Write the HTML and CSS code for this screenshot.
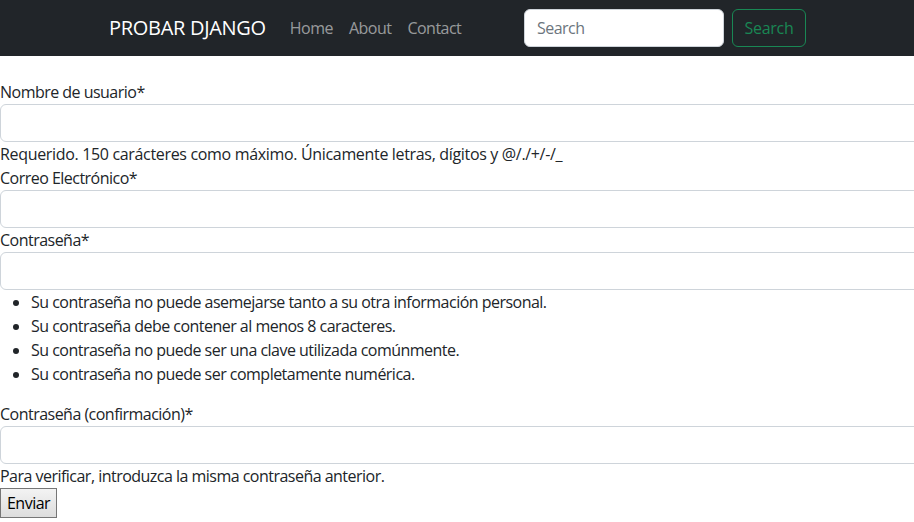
FILE: index.html
```html
<!DOCTYPE html>
<html lang="es">
<head>
<meta charset="utf-8">
<title>Probar Django</title>
<link rel="stylesheet" href="styles.css">
</head>
<body>
<nav class="navbar">
  <div class="nav-inner">
    <a class="brand" href="#">PROBAR DJANGO</a>
    <ul class="nav-links">
      <li><a href="#">Home</a></li>
      <li><a href="#">About</a></li>
      <li><a href="#">Contact</a></li>
    </ul>
    <form class="search">
      <input class="search-input" type="search" placeholder="Search">
      <button class="search-btn" type="button">Search</button>
    </form>
  </div>
</nav>
<main class="page">
  <form class="signup">
    <label class="lbl">Nombre de usuario*</label>
    <input class="field" type="text">
    <span class="help help-wide">Requerido. 150 carácteres como máximo. Únicamente letras, dígitos y @/./+/-/_</span>
    <label class="lbl">Correo Electrónico*</label>
    <input class="field" type="email">
    <label class="lbl">Contraseña*</label>
    <input class="field" type="password">
    <ul class="rules">
      <li>Su contraseña no puede asemejarse tanto a su otra información personal.</li>
      <li>Su contraseña debe contener al menos 8 caracteres.</li>
      <li>Su contraseña no puede ser una clave utilizada comúnmente.</li>
      <li>Su contraseña no puede ser completamente numérica.</li>
    </ul>
    <label class="lbl">Contraseña (confirmación)*</label>
    <input class="field" type="password">
    <span class="help">Para verificar, introduzca la misma contraseña anterior.</span>
    <div><button class="submit" type="submit">Enviar</button></div>
  </form>
</main>
</body>
</html>
```
FILE: styles.css
```css
* { box-sizing: border-box; }
html, body { margin: 0; padding: 0; }
body {
  font-family: "Open Sans", "Noto Sans", sans-serif;
  font-size: 16px;
  line-height: 24px;
  letter-spacing: -0.52px;
  color: #212529;
  background: #fff;
  overflow-x: hidden;
  width: 914px;
}
.navbar {
  background: #212529;
  height: 56px;
}
.nav-inner {
  width: 720px;
  margin: 0 auto;
  padding: 0 12px;
  height: 56px;
  display: flex;
  align-items: center;
}
.brand {
  color: #fff;
  text-decoration: none;
  font-size: 20px;
  line-height: 30px;
  margin-right: 16px;
  letter-spacing: -0.3px;
}
.nav-links {
  list-style: none;
  margin: 0;
  padding: 0;
  display: flex;
}
.nav-links a {
  display: block;
  padding: 8px;
  color: rgba(255,255,255,0.55);
  text-decoration: none;
}
.search {
  margin-left: auto;
  margin-right: -1px;
  display: flex;
  gap: 8px;
}
.search-input {
  width: 200px;
  height: 38px;
  border: 1px solid #ced4da;
  border-radius: 6px;
  padding: 6px 12px;
  font: inherit;
  letter-spacing: inherit;
  background: #fff;
}
.search-input::placeholder { color: #6c757d; }
.search-btn {
  width: 74px;
  height: 38px;
  padding: 6px 0;
  font: inherit;
  letter-spacing: -0.3px;
  color: #198754;
  background: transparent;
  border: 1px solid #198754;
  border-radius: 6px;
}
.page {
  padding-top: 24px;
}
.signup {
  display: flex;
  flex-direction: column;
}
.lbl { display: block; }
.field {
  display: block;
  width: 940px;
  height: 38px;
  border: 1px solid #ced4da;
  border-radius: 6px;
  padding: 6px 12px;
  font: inherit;
  background: #fff;
}
.help { display: block; }
.help-wide { letter-spacing: -0.33px; }
.rules {
  margin: 0 0 16px;
  padding-left: 31px;
}
.submit {
  font: inherit;
  letter-spacing: inherit;
  color: #000;
  padding: 2px 6px;
  height: 30px;
  border: 1px solid #767676;
  border-radius: 0;
  background: linear-gradient(#f3f3f3, #dddddd);
}
```
